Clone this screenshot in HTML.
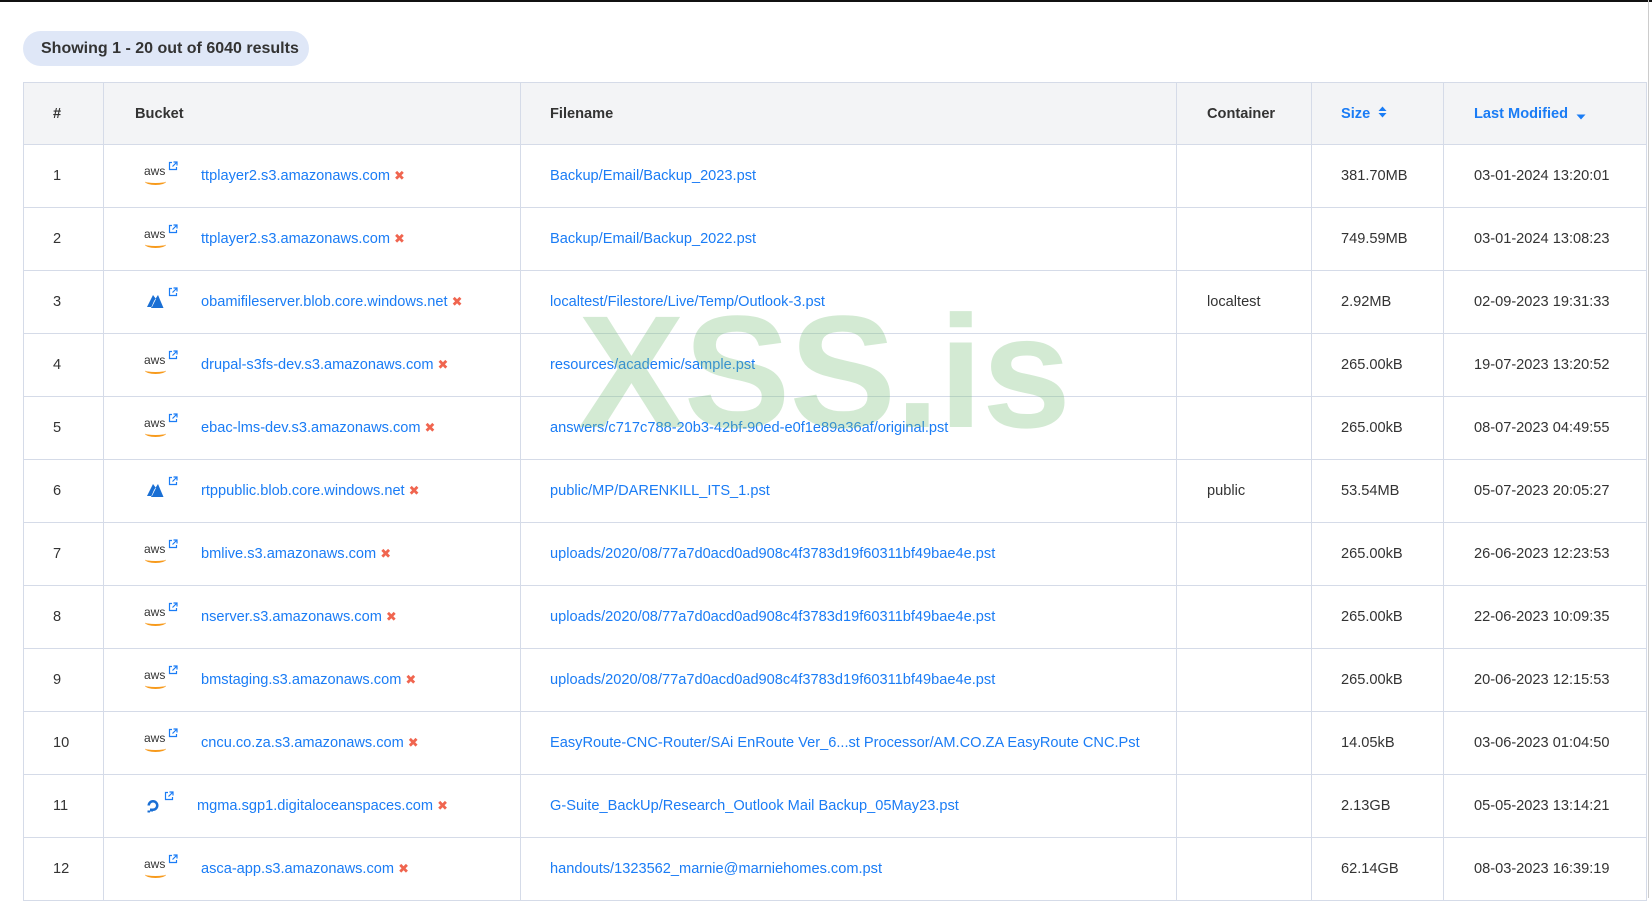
<!DOCTYPE html>
<html><head><meta charset="utf-8"><style>
*{margin:0;padding:0;box-sizing:border-box}
body{width:1652px;height:898px;overflow:hidden;background:#fff;font-family:"Liberation Sans",sans-serif;font-size:14.6px;color:#333;position:relative}
.topline{position:absolute;left:0;top:0;width:1652px;height:2px;background:#111}
.rline{position:absolute;left:1648px;top:0;width:1px;height:898px;background:#ccc}
.pill{position:absolute;left:23px;top:31px;width:286px;height:35px;border-radius:18px;background:#dfe7f7;font-weight:bold;font-size:16px;color:#333;line-height:35px;padding-left:18px}
table{position:absolute;left:23px;top:82px;border-collapse:collapse;table-layout:fixed;width:1623px}
td,th{border:1px solid #d5dbe8;height:63px;text-align:left;white-space:nowrap;font-weight:normal}
th{background:#f3f4f6;height:62px;font-weight:bold;color:#333}
td{color:#333}
th:nth-child(1),td:nth-child(1){padding-left:29px}
th:nth-child(2){padding-left:31px}
td:nth-child(2){padding-left:40px}
th:nth-child(3),td:nth-child(3){padding-left:29px}
th:nth-child(4),td:nth-child(4){padding-left:30px}
th:nth-child(5),td:nth-child(5){padding-left:29px}
th:nth-child(6),td:nth-child(6){padding-left:30px}
.b{color:#1a7cf5}
th.b{color:#1a7cf5}
.bk{display:flex;align-items:center}
.ic{width:57px;position:relative;height:24px}
.x{color:#f0654f;font-size:13px;margin-left:4px}
.aws{position:absolute;left:0;top:1px;font-size:12px;color:#333;line-height:12px}
.aws:after{content:"";position:absolute;left:1px;top:13px;width:21px;height:5px;border-bottom:2px solid #f79a1c;border-radius:0 0 50% 50%}
.ext{position:absolute;left:24px;top:-3px}
.wm{position:absolute;left:578px;top:280px;font-size:160px;font-weight:bold;color:rgba(120,190,120,0.33);letter-spacing:-1px;pointer-events:none}
</style></head><body>
<div class="topline"></div><div class="rline"></div>
<div class="pill">Showing 1 - 20 out of 6040 results</div>
<table>
<colgroup><col style="width:80px"><col style="width:417px"><col style="width:656px"><col style="width:135px"><col style="width:132px"><col style="width:203px"></colgroup>
<tr><th>#</th><th>Bucket</th><th>Filename</th><th>Container</th><th class="b">Size &nbsp;<svg width="9" height="12" viewBox="0 0 9 12"><path d="M0.5 5L4.5 0.5 8.5 5Z M0.5 7L4.5 11.5 8.5 7Z" fill="#1a7cf5"/></svg></th><th class="b">Last Modified &nbsp;<svg width="10" height="6" viewBox="0 0 10 6" style="vertical-align:-2px"><path d="M0.5 0.5L5 5.5 9.5 0.5Z" fill="#1a7cf5"/></svg></th></tr>
</table>
<div class="wm">XSS.is</div>
<script>
var ext='<svg class="ext" width="10" height="10" viewBox="0 0 10 10"><path d="M4 1.5H1.5V8.5H8.5V6" fill="none" stroke="#1a7cf5" stroke-width="1.2"/><path d="M5.5 1H9V4.5M9 1L4.5 5.5" fill="none" stroke="#1a7cf5" stroke-width="1.2"/></svg>';
var icons={
a:'<div class="ic"><span class="aws">aws</span>'+ext+'</div>',
z:'<div class="ic"><svg style="position:absolute;left:2px;top:5px" width="18" height="14" viewBox="0 0 18 14"><path d="M7 0L1 12H6L10 4Z M8 6L12 0 17.5 13H5Z" fill="#1a6fd4"/></svg>'+ext+'</div>',
d:'<div class="ic" style="width:53px"><svg style="position:absolute;left:1px;top:4px" width="16" height="16" viewBox="0 0 16 16"><path d="M8 13A5.5 5.5 0 1 0 2.5 7.5H5A3 3 0 1 1 8 10.5Z" fill="#1a6fd4"/><rect x="5" y="10.5" width="3" height="3" fill="#1a6fd4"/><rect x="2.5" y="12.5" width="2.5" height="2" fill="#1a6fd4"/></svg><span style="position:absolute;left:20px;top:0">'+ext.replace('class="ext"','style="position:absolute;left:0;top:-3px"')+'</span></div>'};
var rows=[
['1','a','ttplayer2.s3.amazonaws.com','Backup/Email/Backup_2023.pst','','381.70MB','03-01-2024 13:20:01'],
['2','a','ttplayer2.s3.amazonaws.com','Backup/Email/Backup_2022.pst','','749.59MB','03-01-2024 13:08:23'],
['3','z','obamifileserver.blob.core.windows.net','localtest/Filestore/Live/Temp/Outlook-3.pst','localtest','2.92MB','02-09-2023 19:31:33'],
['4','a','drupal-s3fs-dev.s3.amazonaws.com','resources/academic/sample.pst','','265.00kB','19-07-2023 13:20:52'],
['5','a','ebac-lms-dev.s3.amazonaws.com','answers/c717c788-20b3-42bf-90ed-e0f1e89a36af/original.pst','','265.00kB','08-07-2023 04:49:55'],
['6','z','rtppublic.blob.core.windows.net','public/MP/DARENKILL_ITS_1.pst','public','53.54MB','05-07-2023 20:05:27'],
['7','a','bmlive.s3.amazonaws.com','uploads/2020/08/77a7d0acd0ad908c4f3783d19f60311bf49bae4e.pst','','265.00kB','26-06-2023 12:23:53'],
['8','a','nserver.s3.amazonaws.com','uploads/2020/08/77a7d0acd0ad908c4f3783d19f60311bf49bae4e.pst','','265.00kB','22-06-2023 10:09:35'],
['9','a','bmstaging.s3.amazonaws.com','uploads/2020/08/77a7d0acd0ad908c4f3783d19f60311bf49bae4e.pst','','265.00kB','20-06-2023 12:15:53'],
['10','a','cncu.co.za.s3.amazonaws.com','EasyRoute-CNC-Router/SAi EnRoute Ver_6...st Processor/AM.CO.ZA EasyRoute CNC.Pst','','14.05kB','03-06-2023 01:04:50'],
['11','d','mgma.sgp1.digitaloceanspaces.com','G-Suite_BackUp/Research_Outlook Mail Backup_05May23.pst','','2.13GB','05-05-2023 13:14:21'],
['12','a','asca-app.s3.amazonaws.com','handouts/1323562_marnie@marniehomes.com.pst','','62.14GB','08-03-2023 16:39:19']];
var h='';rows.forEach(function(r){h+='<tr><td>'+r[0]+'</td><td><div class="bk">'+icons[r[1]]+'<span class="b">'+r[2]+'</span><span class="x">&#10006;</span></div></td><td class="b">'+r[3]+'</td><td>'+r[4]+'</td><td>'+r[5]+'</td><td>'+r[6]+'</td></tr>';});
document.querySelector('table').insertAdjacentHTML('beforeend',h);
</script>
</body></html>
